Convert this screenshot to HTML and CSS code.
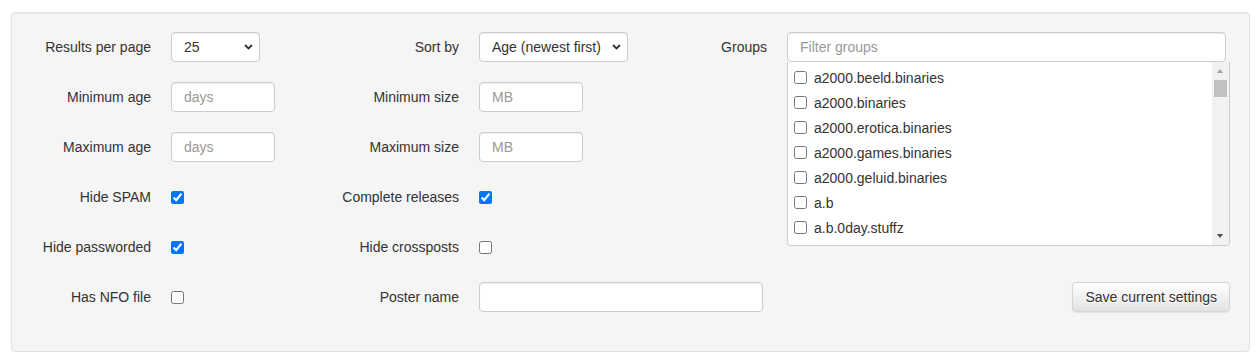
FILE: index.html
```html
<!DOCTYPE html>
<html lang="en">
<head>
    <meta charset="UTF-8">
    <title>Search settings</title>
    <link rel="stylesheet" href="styles.css">
</head>
<body>
    <form class="well">
        <div class="col">
            <div class="row">
                <label>Results per page</label>
                <div class="select-wrap w-results">
                    <select><option>25</option><option>50</option><option>100</option></select>
                    <svg class="chev" width="9" height="6" viewBox="0 0 9 6"><path d="M1 1l3.5 3.5L8 1" fill="none" stroke="#333" stroke-width="1.8"/></svg>
                </div>
            </div>
            <div class="row">
                <label>Minimum age</label>
                <input type="text" class="small" placeholder="days">
            </div>
            <div class="row">
                <label>Maximum age</label>
                <input type="text" class="small" placeholder="days">
            </div>
            <div class="row">
                <label>Hide SPAM</label>
                <input type="checkbox" checked>
            </div>
            <div class="row">
                <label>Hide passworded</label>
                <input type="checkbox" checked>
            </div>
            <div class="row">
                <label>Has NFO file</label>
                <input type="checkbox">
            </div>
        </div>

        <div class="col">
            <div class="row">
                <label>Sort by</label>
                <div class="select-wrap w-sort">
                    <select><option>Age (newest first)</option><option>Age (oldest first)</option></select>
                    <svg class="chev" width="9" height="6" viewBox="0 0 9 6"><path d="M1 1l3.5 3.5L8 1" fill="none" stroke="#333" stroke-width="1.8"/></svg>
                </div>
            </div>
            <div class="row">
                <label>Minimum size</label>
                <input type="text" class="small" placeholder="MB">
            </div>
            <div class="row">
                <label>Maximum size</label>
                <input type="text" class="small" placeholder="MB">
            </div>
            <div class="row">
                <label>Complete releases</label>
                <input type="checkbox" checked>
            </div>
            <div class="row">
                <label>Hide crossposts</label>
                <input type="checkbox">
            </div>
            <div class="row">
                <label>Poster name</label>
                <input type="text" class="poster">
            </div>
        </div>

        <div class="col col-groups">
            <div class="groups">
                <label>Groups</label>
                <div class="groups-box">
                    <input type="text" class="filter" placeholder="Filter groups">
                    <div class="group-list">
                        <div class="items">
                            <label class="item"><input type="checkbox"> a2000.beeld.binaries</label>
                            <label class="item"><input type="checkbox"> a2000.binaries</label>
                            <label class="item"><input type="checkbox"> a2000.erotica.binaries</label>
                            <label class="item"><input type="checkbox"> a2000.games.binaries</label>
                            <label class="item"><input type="checkbox"> a2000.geluid.binaries</label>
                            <label class="item"><input type="checkbox"> a.b</label>
                            <label class="item"><input type="checkbox"> a.b.0day.stuffz</label>
                        </div>
                        <div class="scrollbar">
                            <div class="arrow up"></div>
                            <div class="thumb"></div>
                            <div class="track"></div>
                            <div class="arrow down"></div>
                        </div>
                    </div>
                </div>
            </div>
            <button type="button" class="btn">Save current settings</button>
        </div>
    </form>
</body>
</html>
```

FILE: styles.css
```css
body { margin: 0; font-family: "Liberation Sans", Arial, sans-serif; font-size: 14px; color: #333; background: #fff; }
.well { display: grid; grid-template-columns: 308px 308px 1fr; margin: 12px 8px 0 11px; padding: 19px 19px 39px; background: #f5f5f5; border: 1px solid #e3e3e3; border-radius: 4px; box-shadow: inset 0 1px 1px rgba(0,0,0,0.05); }
.col { display: flex; flex-direction: column; gap: 20px; }
.row { display: flex; align-items: center; gap: 20px; height: 30px; }
.row > label, .groups > label { width: 120px; flex: none; text-align: right; }
input[type=text], select { box-sizing: border-box; height: 30px; font-family: inherit; font-size: 14px; color: #333; background: #fff; border: 1px solid #ccc; border-radius: 4px; box-shadow: inset 0 1px 1px rgba(0,0,0,0.075); padding: 0 12px; outline: none; }
input::placeholder { color: #999; }
input[type=checkbox] { width: 13px; height: 13px; margin: 0; flex: none; }
.small { width: 104px; flex: none; }
.poster { width: 284px; flex: none; }
.select-wrap { position: relative; flex: none; }
.select-wrap select { width: 100%; appearance: none; -webkit-appearance: none; padding-right: 24px; }
.w-results { width: 89px; }
.w-sort { width: 149px; }
.chev { position: absolute; right: 7px; top: 12px; pointer-events: none; }
.col-groups { justify-content: space-between; }
.groups { display: flex; gap: 20px; }
.groups > label { line-height: 30px; }
.groups-box { flex: 1; display: flex; flex-direction: column; }
.filter { margin-right: 4px; }
.group-list { display: flex; height: 184px; background: #fff; border: 1px solid #ccc; border-top: none; border-radius: 0 0 4px 4px; box-sizing: border-box; overflow: hidden; }
.items { flex: 1; padding: 3px 6px; overflow: hidden; }
.item { display: flex; align-items: center; gap: 7px; height: 25px; }
.scrollbar { width: 17px; display: flex; flex-direction: column; background: #f1f1f1; }
.arrow { height: 17px; flex: none; position: relative; }
.arrow::after { content: ""; position: absolute; left: 5px; border-left: 3.5px solid transparent; border-right: 3.5px solid transparent; }
.up::after { top: 7px; border-bottom: 4px solid #a3a3a3; }
.down::after { top: 6px; border-top: 4px solid #505050; }
.thumb { height: 17px; margin: 1px 2px 0; background: #c1c1c1; }
.track { flex: 1; }
.btn { align-self: flex-end; height: 30px; padding: 0 12px; font-family: inherit; font-size: 14px; color: #333; border: 1px solid #d5d5d5; border-radius: 4px; background: linear-gradient(to bottom, #fff 0, #e2e2e2 100%); text-shadow: 0 1px 0 #fff; box-shadow: 0 1px 1px rgba(0,0,0,0.075); }
```
